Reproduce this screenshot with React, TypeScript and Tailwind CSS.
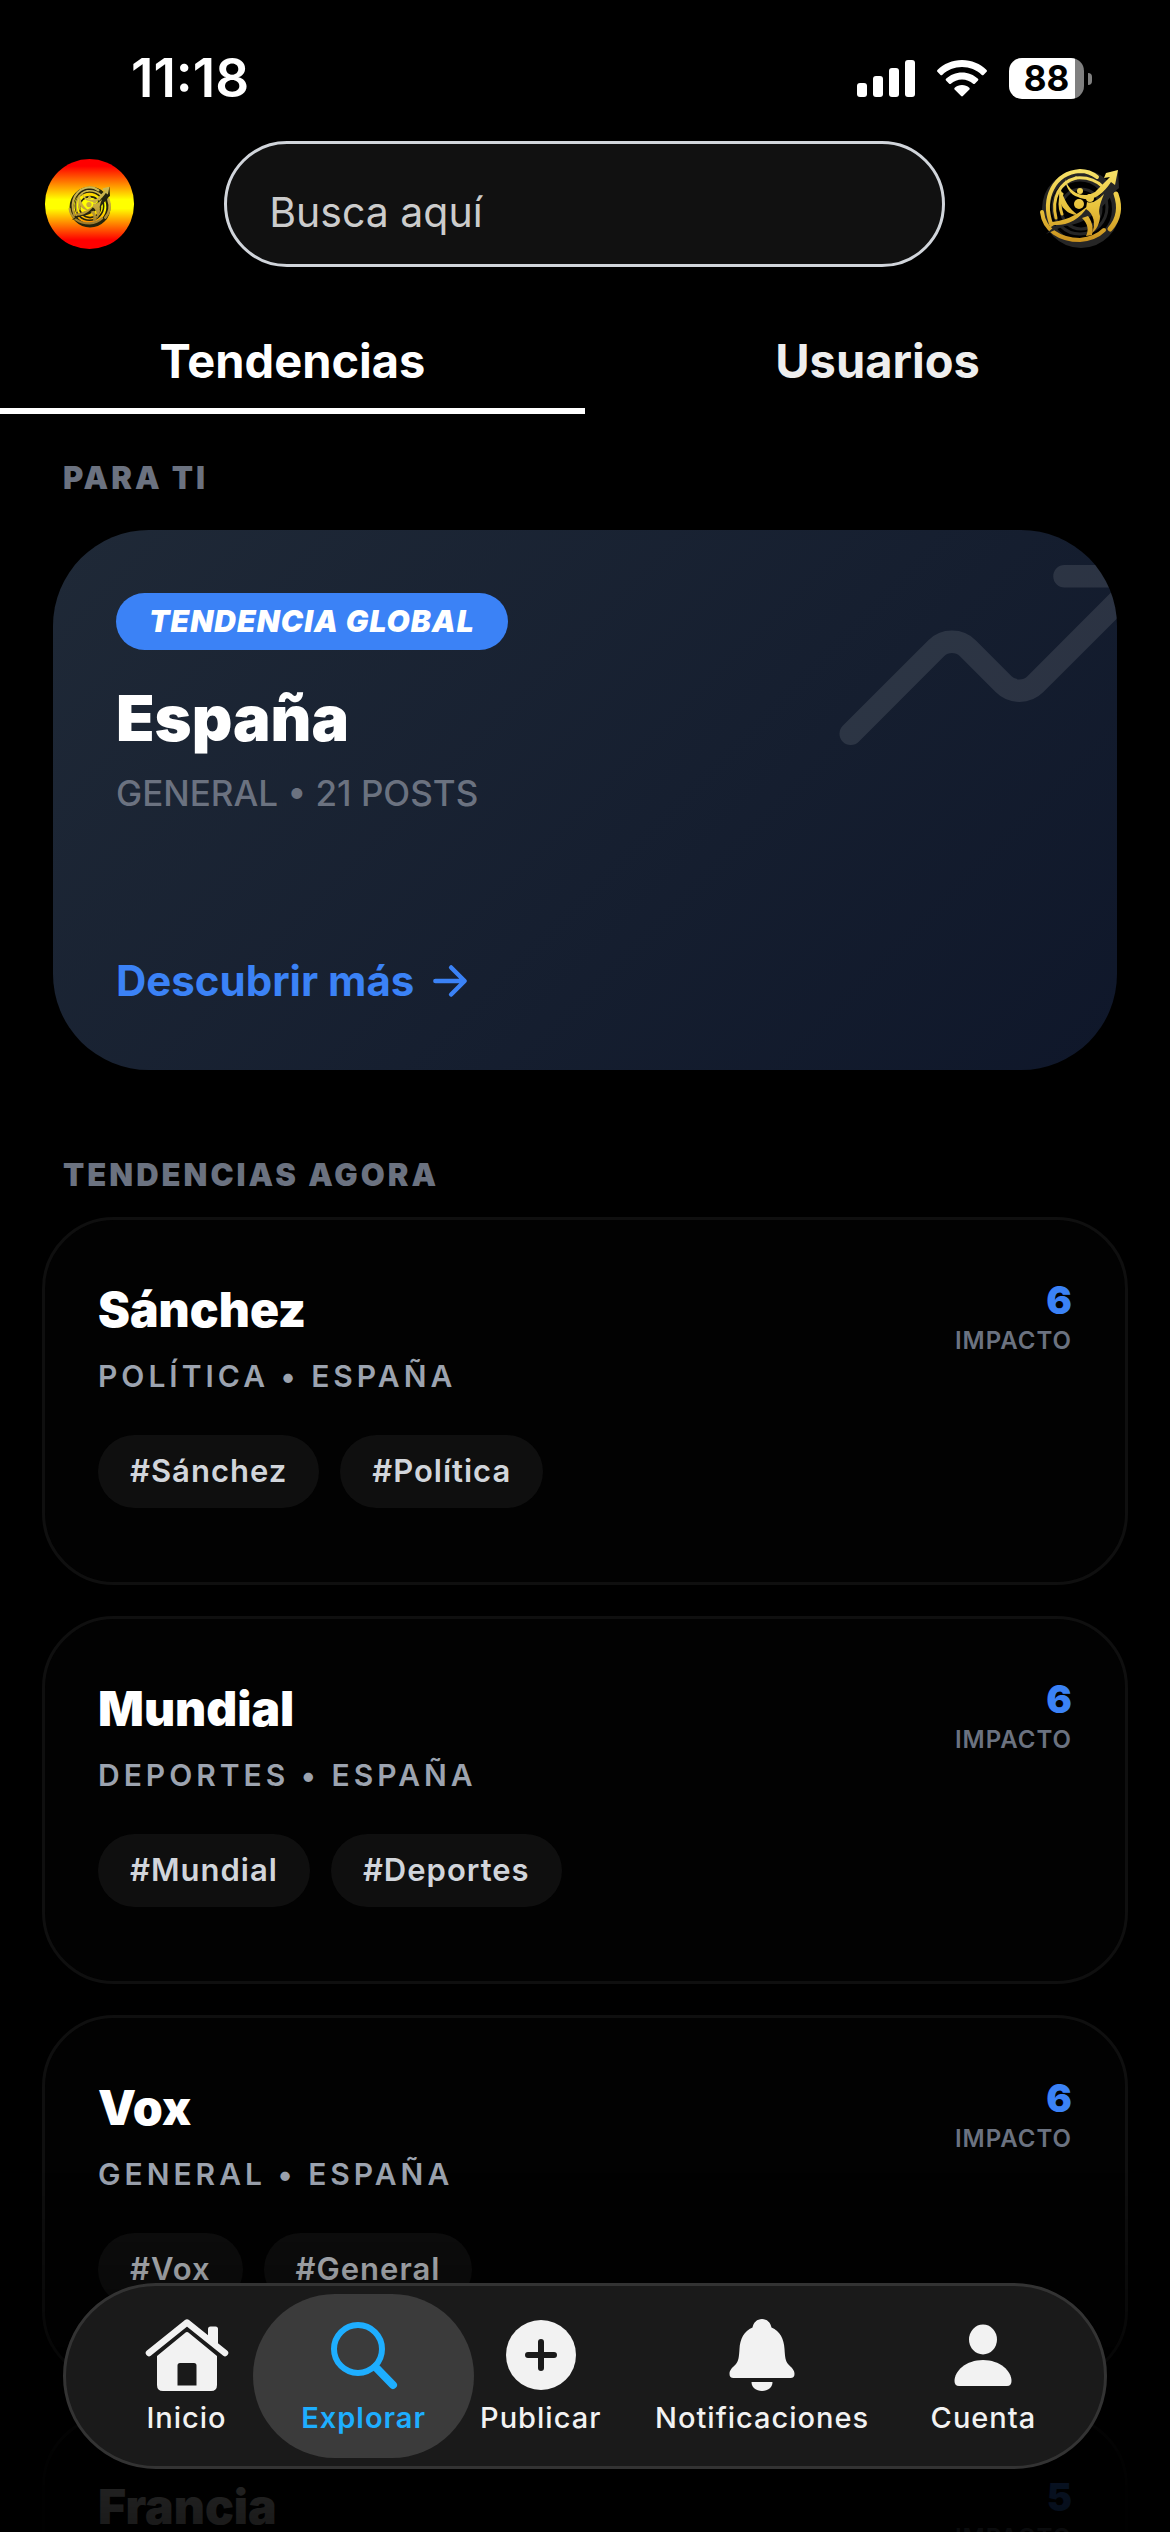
import { useId, useState, type ReactNode } from "react";
import { IoArrowForward, IoTrendingUpOutline } from "react-icons/io5";

const trends = [
  { name: "Sánchez", category: "POLÍTICA • ESPAÑA", tags: ["#Sánchez", "#Política"], impact: 6 },
  { name: "Mundial", category: "DEPORTES • ESPAÑA", tags: ["#Mundial", "#Deportes"], impact: 6 },
  { name: "Vox", category: "GENERAL • ESPAÑA", tags: ["#Vox", "#General"], impact: 6 },
  { name: "Francia", category: "GENERAL • ESPAÑA", tags: ["#Francia", "#General"], impact: 5 },
];

function Emblem({ className, muted = false }: { className: string; muted?: boolean }) {
  const id = useId();
  const gold = `url(#${id})`;
  const dark = muted ? "#25240c" : "#262626";
  return (
    <svg viewBox="0 0 120 120" className={className} aria-hidden="true">
      <defs>
        <linearGradient id={id} x1="20" y1="25" x2="20" y2="100" gradientUnits="userSpaceOnUse">
          <stop offset="0" stopColor={muted ? "#cdbb58" : "#f7e36a"} />
          <stop offset="0.5" stopColor={muted ? "#c9ab3c" : "#e9c33c"} />
          <stop offset="1" stopColor={muted ? "#97752a" : "#c78d1c"} />
        </linearGradient>
      </defs>
      <g fill="none" strokeLinecap="round">
        <circle cx="61" cy="65" r="35" stroke={dark} strokeWidth="8" />
        <circle cx="60" cy="63" r="27" stroke={dark} strokeWidth="3" />
        <circle cx="61" cy="65" r="20" stroke={dark} strokeWidth="3" />
        <path d="M31 80C22 54 34 29 60 27C66 27 72 29 77 33" stroke={gold} strokeWidth="4" />
        <path d="M36 74C31 54 40 38 56 34" stroke={gold} strokeWidth="3" />
        <path d="M22 68C24 86 40 96 60 96C70 95 78 92 84 86" stroke={gold} strokeWidth="4" />
        <path d="M96 50C101 64 98 76 90 85" stroke={gold} strokeWidth="5" />
        <path d="M56 34C68 33 77 37 83 43" stroke={gold} strokeWidth="3" />
        <path d="M42 50Q38 60 42 70" stroke={gold} strokeWidth="3" />
      </g>
      <path d="M26 90L42 76C62 74 76 56 88 42L84 40L98 26L99 44L93 49C82 66 66 80 44 82Z" fill={dark} />
      <path d="M45 35C50 50 64 55 75 48L90 33L84 34L86 29L98 26L95 41L91 38C80 55 68 58 58 53C50 51 46 43 45 35Z" fill={gold} />
      <path d="M28 85L32 78C50 76 60 68 68 62C60 76 46 82 34 81Z" fill={gold} />
      <path d="M40 43C36 60 46 71 58 71C49 65 44 56 40 43Z" fill={gold} />
      <path d="M62 74C68 80 69 86 66 92L72 91C74 82 71 76 68 72Z" fill={gold} />
      <path d="M67 58C73 60 78 56 84 50C80 60 78 66 80 72C80 80 76 86 72 89C76 80 74 70 66 65Z" fill={gold} />
      <circle cx="60" cy="47" r="3" fill={gold} />
      <circle cx="70" cy="54" r="4" fill={gold} />
      <circle cx="59" cy="60" r="5" fill={gold} />
    </svg>
  );
}

function StatusBar() {
  return (
    <div className="flex h-[141px] items-center justify-between pt-4 pr-[78px] pl-[131px]">
      <span className="text-[53px] leading-none font-semibold text-white">11:18</span>
      <div className="flex items-center gap-[22px]">
        <svg viewBox="0 0 58 38" className="h-[38px] w-[58px]" fill="#fff" aria-label="Señal">
          <rect x="0" y="23" width="10" height="14" rx="3" />
          <rect x="16" y="16" width="10" height="21" rx="3" />
          <rect x="32" y="8" width="10" height="29" rx="3" />
          <rect x="48" y="0" width="10" height="37" rx="3" />
        </svg>
        <svg viewBox="0 0 50 37" className="h-[37px] w-[50px]" fill="#fff" aria-label="Wi-Fi">
          <path d="M25 0C34.500 0 43.300 3.700 49.600 10.100Q50.300 10.900 49.600 11.700L46.500 14.900Q45.600 15.700 44.800 14.900C39.500 9.900 32.600 7 25 7S10.500 9.900 5.200 14.900Q4.400 15.700 3.500 14.900L.4 11.700Q-.3 10.900 .4 10.100C6.700 3.700 15.500 0 25 0Z" />
          <path d="M25 12.500C31.200 12.500 36.800 14.900 41 18.800Q41.800 19.600 41 20.500L37.800 23.700Q37 24.500 36.100 23.700C33.200 21 29.300 19.400 25 19.400S16.800 21 13.900 23.700Q13 24.500 12.200 23.700L9 20.500Q8.200 19.600 9 18.800C13.200 14.900 18.800 12.500 25 12.500Z" />
          <path d="M25 25C27.800 25 30.300 26 32.300 27.700Q33.200 28.500 32.400 29.400L25.900 36.100Q25 37 24.100 36.100L17.600 29.400Q16.800 28.500 17.700 27.700C19.700 26 22.200 25 25 25Z" />
        </svg>
        <div className="flex items-center gap-1" aria-label="Batería 88 %">
          <div className="flex h-[41px] w-[75px] items-center justify-center rounded-[13px] bg-[linear-gradient(to_right,#fff_88%,#808080_88%)] text-[35px] leading-none font-bold text-black">
            88
          </div>
          <div className="h-3 w-1 rounded-r-full bg-[#808080]" />
        </div>
      </div>
    </div>
  );
}

function Header() {
  return (
    <header className="flex items-center justify-between px-[45px]">
      <button
        aria-label="España"
        className="flex size-[90px] items-center justify-center rounded-full bg-[linear-gradient(to_bottom,#f00_8%,#ff0_45%,#ff0_55%,#f00_90%)]"
      >
        <Emblem className="size-[63px]" muted />
      </button>
      <input
        type="search"
        aria-label="Buscar"
        placeholder="Busca aquí"
        className="mx-[90px] h-[126px] min-w-0 grow rounded-full border-[3px] border-[#d1d5db] bg-[#111] px-[42px] pt-4 text-[41px] text-white outline-none placeholder:text-[#ccc]"
      />
      <button aria-label="Inicio de la aplicación" className="flex size-[90px] items-center justify-center">
        <Emblem className="size-[120px] shrink-0" />
      </button>
    </header>
  );
}

function Tabs() {
  const [active, setActive] = useState("Tendencias");
  return (
    <div role="tablist" className="mt-[45px] grid grid-cols-2">
      {["Tendencias", "Usuarios"].map((tab) => (
        <button
          key={tab}
          role="tab"
          aria-selected={tab === active}
          onClick={() => setActive(tab)}
          className={
            tab === active
              ? "h-[102px] border-b-[6px] border-white text-[47px] leading-none font-bold text-white"
              : "h-[102px] border-b-[6px] border-transparent text-[47px] leading-none font-bold text-[#eee]"
          }
        >
          {tab}
        </button>
      ))}
    </div>
  );
}

function SectionTitle({ children }: { children: ReactNode }) {
  return <h2 className="px-[63px] text-[31px] leading-9 font-black tracking-[3px] text-[#6b7280]">{children}</h2>;
}

function FeaturedCard() {
  return (
    <article className="relative mx-[53px] mt-[34px] flex h-[540px] flex-col items-start overflow-hidden rounded-[96px] bg-linear-135 from-[#1f2937] to-[#0f172a] p-[63px]">
      <IoTrendingUpOutline className="absolute -top-[55px] -right-[60px] size-[360px] text-white/10" />
      <span className="flex h-[57px] items-center rounded-full bg-[#3b82f6] px-[33px] text-[30px] font-black tracking-[1px] text-white italic">
        TENDENCIA GLOBAL
      </span>
      <h3 className="mt-[30px] text-[63px] leading-[76px] font-black text-white">España</h3>
      <p className="mt-[15px] text-[35px] leading-[44px] font-medium text-[#6b7280]">GENERAL • 21 POSTS</p>
      <a href="#descubrir" className="mt-auto flex items-center gap-3 text-[42px] leading-[52px] font-bold text-[#3b82f6]">
        Descubrir más
        <IoArrowForward className="size-12" />
      </a>
    </article>
  );
}

function TrendCard({ trend }: { trend: (typeof trends)[number] }) {
  return (
    <article className="flex h-[368px] shrink-0 justify-between rounded-[72px] border-[3px] border-[#0f0f0f] bg-[#020202] px-[53px] pt-[60px]">
      <div>
        <h3 className="text-[48px] leading-[60px] font-black text-white">{trend.name}</h3>
        <p className="mt-[18px] text-[30px] leading-9 font-semibold tracking-[4px] text-[#9ca3af]">{trend.category}</p>
        <ul className="mt-[41px] flex gap-[21px]">
          {trend.tags.map((tag) => (
            <li key={tag}>
              <button className="flex h-[73px] items-center rounded-full bg-[#0f0f0f] px-8 text-[31px] font-semibold tracking-[1px] text-[#d1d5db]">
                {tag}
              </button>
            </li>
          ))}
        </ul>
      </div>
      <div className="flex flex-col items-end">
        <strong className="text-[38px] leading-10 font-black text-[#3b82f6]">{trend.impact}</strong>
        <span className="mt-[6px] text-[24px] leading-[30px] font-semibold tracking-[1px] text-[#6b7280]">IMPACTO</span>
      </div>
    </article>
  );
}

const navItems: { label: string; icon: ReactNode }[] = [
  {
    label: "Inicio",
    icon: (
      <>
        <path d="M61 22V11Q61 8.500 63.500 8.500H68.500Q71 8.500 71 11V30Z" fill="currentColor" />
        <path d="M2 35L40 4.500L78 35" fill="none" stroke="currentColor" strokeWidth="6.500" strokeLinecap="round" strokeLinejoin="round" />
        <path
          fillRule="evenodd"
          d="M10 38L38 15Q40 13 42 15L70 38V67Q70 73 64 73H16Q10 73 10 67ZM33 45Q30.500 45 30.500 47.500V67.500H49.500V47.500Q49.500 45 47 45Z"
          fill="currentColor"
        />
      </>
    ),
  },
  {
    label: "Explorar",
    icon: (
      <>
        <circle cx="34" cy="31" r="24" fill="none" stroke="currentColor" strokeWidth="6" />
        <path d="M51.500 49L69 67" stroke="currentColor" strokeWidth="8" strokeLinecap="round" />
      </>
    ),
  },
  {
    label: "Publicar",
    icon: (
      <>
        <circle cx="40" cy="37" r="35" fill="currentColor" />
        <path d="M40 24V50M27 37H53" stroke="#1a1a1a" strokeWidth="6" strokeLinecap="round" />
      </>
    ),
  },
  {
    label: "Notificaciones",
    icon: (
      <>
        <path
          d="M40 1C45 1 48.500 4.500 49.500 9.500C58 13 62 21 62.500 31C63 39 63.500 43 66 46C70 50 72.500 52 72.500 56Q72.500 60 68.500 60H11.500Q7.500 60 7.500 56C7.500 52 10 50 14 46C16.500 43 17 39 17.500 31C18 21 22 13 30.500 9.500C31.500 4.500 35 1 40 1Z"
          fill="currentColor"
        />
        <path d="M29.500 64H50.500C50.500 69.500 46 73 40 73S29.500 69.500 29.500 64Z" fill="currentColor" />
      </>
    ),
  },
  {
    label: "Cuenta",
    icon: (
      <>
        <ellipse cx="40" cy="21.500" rx="14" ry="15" fill="currentColor" />
        <path d="M40 42C57 42 68.500 53 68.500 63Q68.500 68 64 68H16Q11.500 68 11.500 63C11.500 53 23 42 40 42Z" fill="currentColor" />
      </>
    ),
  },
];

function BottomNav() {
  const [active, setActive] = useState("Explorar");
  return (
    <nav className="fixed inset-x-[63px] bottom-[63px] grid h-[186px] grid-cols-[4fr_4fr_4fr_6fr_4fr] rounded-full border-[3px] border-[#333] bg-[#1a1a1a] px-8">
      {navItems.map(({ label, icon }) => (
        <button
          key={label}
          onClick={() => setActive(label)}
          aria-current={label === active ? "page" : undefined}
          className={
            label === active
              ? "relative flex flex-col items-center pt-8 text-[#1eaeff]"
              : "relative flex flex-col items-center pt-8 text-[#f2f2f2]"
          }
        >
          {label === active && <span className="absolute -inset-x-[22px] inset-y-2 rounded-[82px] bg-[#3b3b3b]" />}
          <svg viewBox="0 0 80 74" className="relative h-[74px] w-20 overflow-visible" aria-hidden="true">
            {icon}
          </svg>
          <span
            className={
              label === active
                ? "relative mt-2 text-[29px] leading-9 font-semibold tracking-[1px]"
                : "relative mt-2 text-[29px] leading-9 font-medium tracking-[1px]"
            }
          >
            {label}
          </span>
        </button>
      ))}
    </nav>
  );
}

export default function App() {
  return (
    <div className="h-screen overflow-hidden bg-black font-['Inter',sans-serif]">
      <StatusBar />
      <Header />
      <Tabs />
      <main className="pt-[46px]">
        <SectionTitle>PARA TI</SectionTitle>
        <FeaturedCard />
        <div className="mt-[87px]">
          <SectionTitle>TENDENCIAS AGORA</SectionTitle>
        </div>
        <div className="mx-[42px] mt-6 flex flex-col gap-[31px]">
          {trends.map((trend) => (
            <TrendCard key={trend.name} trend={trend} />
          ))}
        </div>
      </main>
      <div className="pointer-events-none fixed inset-x-0 bottom-0 h-[360px] bg-[linear-gradient(to_bottom,rgba(0,0,0,0),rgba(0,0,0,0.86)_83%,rgba(0,0,0,0.9))]" />
      <BottomNav />
    </div>
  );
}
